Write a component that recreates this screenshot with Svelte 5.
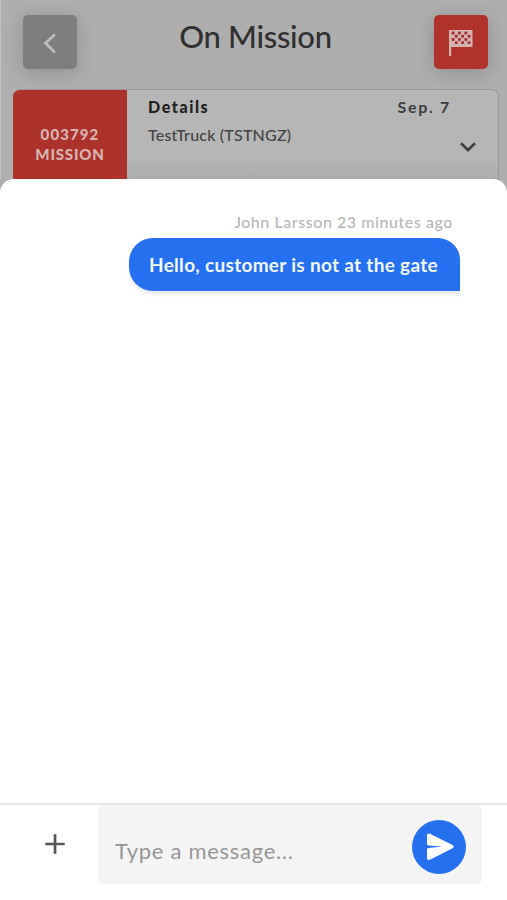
<script>
  const mission = {
    number: '003792',
    label: 'MISSION',
    date: 'Sep. 7',
    truck: 'TestTruck (TSTNGZ)'
  };

  const messages = [
    { author: 'John Larsson', time: '23 minutes ago', text: 'Hello, customer is not at the gate' }
  ];

  // dark squares of the checkered flag
  const checks = [];
  for (let row = 0; row < 4; row++) {
    for (let col = row % 2; col < 6; col += 2) {
      checks.push({ x: 3.6 + col * 3.2, y: 2.6 + row * 3.2 });
    }
  }

  let draft = $state('');
</script>

<div class="screen">
  <div class="mission-page">
    <header>
      <button class="square-btn back" aria-label="Back">
        <svg width="54" height="54" viewBox="0 0 54 54">
          <path d="M32 19.500L22.500 28L32 37.500" />
        </svg>
      </button>
      <h1>On Mission</h1>
      <button class="square-btn finish" aria-label="Finish mission">
        <svg width="26" height="28" viewBox="0 0 26 28">
          <path d="M1 1h23.500v17H3.200V27H1z" fill="#d2b3ae" />
          {#each checks as c}
            <rect x={c.x} y={c.y} width="2.9" height="2.9" rx="0.8" fill="#a32f32" />
          {/each}
        </svg>
      </button>
    </header>

    <section class="card">
      <div class="tag">
        <span>{mission.number}</span>
        <span class="tag-label">{mission.label}</span>
      </div>
      <div class="info">
        <div class="row">
          <strong class="details">Details</strong>
          <strong class="date">{mission.date}</strong>
        </div>
        <div class="row">
          <span class="truck">{mission.truck}</span>
          <svg class="chevron" width="18" height="12" viewBox="0 0 18 12">
            <path d="M2 2.200L9 9L16 2.200" />
          </svg>
        </div>
      </div>
    </section>
  </div>

  <div class="sheet">
    <div class="messages">
      {#each messages as message}
        <div class="meta">{message.author} {message.time}</div>
        <div class="bubble"><span>{message.text}</span></div>
      {/each}
    </div>

    <footer>
      <button class="add" aria-label="Add attachment">
        <svg width="20" height="20" viewBox="0 0 20 20">
          <path d="M10 .3v19.400M.3 10h19.400" />
        </svg>
      </button>
      <div class="composer">
        <input type="text" placeholder="Type a message..." bind:value={draft} />
        <button class="send" aria-label="Send">
          <svg width="54" height="54" viewBox="0 0 54 54">
            <path d="M15 15.500Q15 12.500 18 13.800L40.500 25Q43 26.600 40.500 28.200L18 39.700Q15 41 15 38V29.500Q15 28.300 16.500 28L30 26.600L16.500 25.500Q15 25.300 15 24Z" />
          </svg>
        </button>
      </div>
    </footer>
  </div>
</div>

<style>
  :global(body) {
    margin: 0;
  }
  .screen {
    display: flex;
    flex-direction: column;
    width: 507px;
    height: 900px;
    overflow: hidden;
    background: #aeaeae;
    font-family: Lato, "Open Sans", sans-serif;
    box-sizing: border-box;
  }
  button {
    padding: 0;
    border: 0;
    background: none;
  }
  svg {
    display: block;
  }
  .mission-page {
    height: 179px;
    flex: none;
    border-left: 1px solid #c4c4c4;
    box-sizing: border-box;
  }
  header {
    display: flex;
    justify-content: space-between;
    height: 89px;
    box-sizing: border-box;
    padding: 15px 19px 0 22px;
  }
  h1 {
    margin: 2px 0 0;
    font-size: 31px;
    line-height: 38px;
    font-weight: 500;
    letter-spacing: -0.3px;
    color: #303030;
    white-space: nowrap;
  }
  .square-btn {
    display: flex;
    align-items: center;
    justify-content: center;
    width: 54px;
    height: 54px;
    border-radius: 5px;
    box-shadow: 0 3px 18px rgba(0, 0, 0, 0.18);
  }
  .back {
    background: #7e7e7e;
  }
  .back path {
    fill: none;
    stroke: #bdbdbd;
    stroke-width: 2.8;
  }
  .finish {
    background: #b13228;
  }
  .finish svg {
    margin-top: 2px;
  }
  .card {
    display: flex;
    height: 96px;
    margin: 0 8px 0 12px;
    box-sizing: border-box;
    border: 1px solid #999;
    border-left: 0;
    border-radius: 7px 7px 0 0;
    overflow: hidden;
    background: linear-gradient(#b6b6b6 70%, #a9a9a9);
  }
  .tag {
    display: flex;
    flex-direction: column;
    align-items: center;
    width: 114px;
    padding-top: 34px;
    box-sizing: border-box;
    background: #ad3229;
    color: #d5b5b0;
    font-size: 15px;
    line-height: 20px;
    font-weight: 900;
    letter-spacing: 1.1px;
  }
  .tag-label {
    letter-spacing: 0.8px;
  }
  .info {
    flex: 1;
    padding: 7px 21px 0;
  }
  .row {
    display: flex;
    justify-content: space-between;
    line-height: 20px;
  }
  .details {
    font-size: 16px;
    font-weight: 900;
    letter-spacing: 1.6px;
    color: #202020;
  }
  .date {
    margin-right: 26px;
    font-size: 16px;
    letter-spacing: 1.7px;
    color: #3d3d3d;
  }
  .truck {
    margin-top: 8px;
    font-size: 16px;
    font-weight: 500;
    letter-spacing: 0.2px;
    color: #444;
  }
  .chevron {
    margin-top: 24px;
  }
  .chevron path {
    fill: none;
    stroke: #414141;
    stroke-width: 2.7;
  }
  .sheet {
    display: flex;
    flex-direction: column;
    flex: 1;
    border-radius: 14px 14px 0 0;
    background: #fff;
    z-index: 1;
  }
  .messages {
    display: flex;
    flex-direction: column;
    align-items: flex-end;
    flex: 1;
    padding: 33px 47px 0 0;
  }
  .meta {
    margin-right: 7px;
    font-size: 16px;
    line-height: 20px;
    font-weight: 500;
    letter-spacing: 0.56px;
    color: #b8b8b8;
  }
  .bubble {
    width: 331px;
    height: 53px;
    margin-top: 6px;
    padding-left: 20px;
    box-sizing: border-box;
    border-radius: 24px 22px 0 24px;
    background: #2470f0;
    box-shadow: 0 4px 3px rgba(40, 60, 90, 0.09);
    color: #f1f7ff;
    font-size: 19px;
    line-height: 53px;
    font-weight: 700;
    letter-spacing: 0.3px;
    white-space: nowrap;
  }
  footer {
    display: flex;
    height: 97px;
    box-sizing: border-box;
    border-top: 2px solid #e5e5e5;
  }
  .add {
    width: 98px;
    height: 77px;
    padding-left: 45px;
  }
  .add path {
    stroke: #555;
    stroke-width: 2.7;
  }
  .composer {
    display: flex;
    width: 384px;
    height: 79px;
    box-sizing: border-box;
    padding: 15px 16px 0 17px;
    border-radius: 5px;
    background: #f4f4f4;
  }
  input {
    flex: 1;
    min-width: 0;
    height: 30px;
    margin-top: 15px;
    padding: 0;
    border: 0;
    outline: 0;
    background: none;
    font-family: inherit;
    font-size: 22px;
    letter-spacing: 0.7px;
    color: #555;
  }
  input::placeholder {
    color: #969696;
  }
  .send {
    width: 54px;
    height: 54px;
    border-radius: 50%;
    background: #2470f0;
  }
  .send path {
    fill: #fff;
  }
</style>
